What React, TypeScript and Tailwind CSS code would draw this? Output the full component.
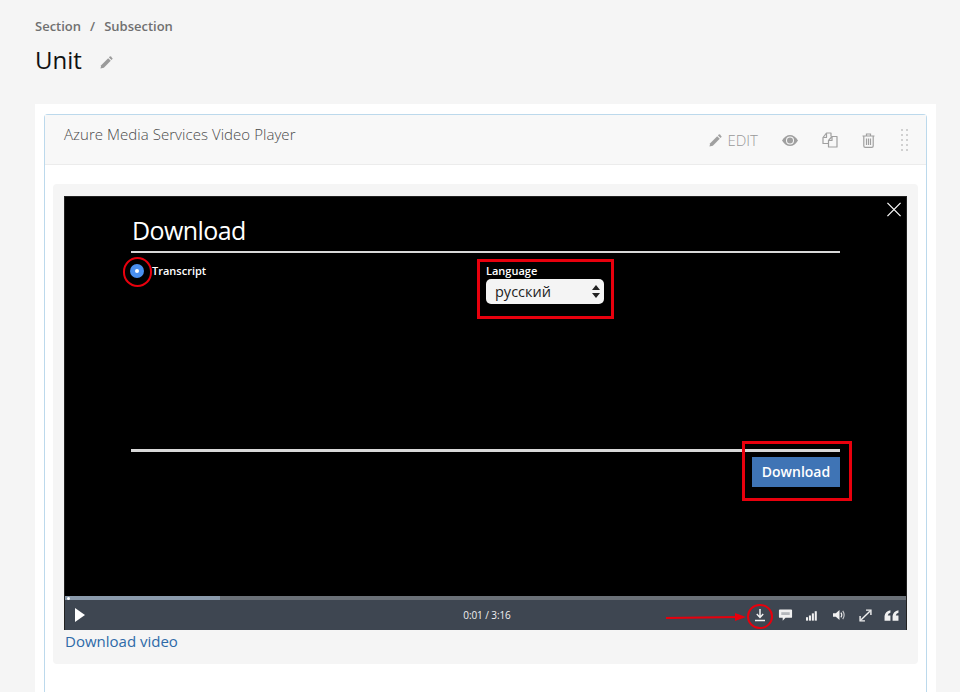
const sans = "font-['Open_Sans',sans-serif]";

function PencilGlyph({ className }: { className: string }) {
  return (
    <svg viewBox="0 0 14 14" className={className} fill="currentColor">
      <path d="M0.5 13.5 L1.3 9.9 L8.8 2.4 L11.6 5.2 L4.1 12.7 Z" />
      <path d="M9.6 1.6 L10.7 0.6 Q11.2 0.2 11.7 0.6 L13.4 2.3 Q13.8 2.8 13.4 3.3 L12.4 4.4 Z" />
    </svg>
  );
}

function EyeGlyph() {
  return (
    <svg viewBox="0 0 16 11" className="h-[11px] w-[16px]" fill="currentColor">
      <path d="M0 5.5 Q3.5 0 8 0 Q12.5 0 16 5.5 Q12.5 11 8 11 Q3.5 11 0 5.5 Z" />
      <circle cx="8" cy="5.5" r="4" fill="#f8f8f8" />
      <circle cx="8" cy="5.5" r="3" />
    </svg>
  );
}

function CopyGlyph() {
  return (
    <svg viewBox="0 0 16 16" className="h-4 w-4" fill="none" stroke="currentColor" strokeWidth="1.2" strokeLinejoin="round">
      <path d="M6.5 11.5 H1 V5.5 L4.5 1 H9 V4.5" />
      <path d="M4.5 1.2 V5.5 H1.2" />
      <path d="M6.5 15 V8.5 L10 4.5 H15 V15 Z" />
      <path d="M10 4.7 V8.5 H6.7" />
    </svg>
  );
}

function TrashGlyph() {
  return (
    <svg viewBox="0 0 13 15" className="h-[15px] w-[13px]" fill="none" stroke="currentColor" strokeWidth="1.2">
      <path d="M0.5 3 H12.5 M4.5 3 V1 H8.5 V3" />
      <path d="M1.8 3 V13 Q1.8 14.4 3.2 14.4 H9.8 Q11.2 14.4 11.2 13 V3" />
      <path d="M4.5 5.5 V12 M6.5 5.5 V12 M8.5 5.5 V12" />
    </svg>
  );
}

function Controls() {
  return (
    <div className="flex h-[30px] items-center bg-[#3e4651] pl-[10px] pr-[7px] text-white">
      <div className="flex-1">
        <svg viewBox="0 0 10 14" className="h-[14px] w-[10px]" fill="white">
          <path d="M0 0 L10 7 L0 14 Z" />
        </svg>
      </div>
      <span className="text-[10px] tracking-[-0.1px] text-[#f1f1f1]">0:01 / 3:16</span>
      <div className="flex flex-1 items-center justify-end">
        {/* download */}
        <svg viewBox="0 0 14 14" className="h-[14px] w-[14px]" fill="none" stroke="#f1f1f1" strokeWidth="1.5">
          <path d="M7 1 V9 M3.8 6 L7 9.4 L10.2 6 M2 12.5 H12" />
        </svg>
        {/* captions bubble */}
        <svg viewBox="0 0 16 14" className="ml-[11px] h-[14px] w-[15px]">
          <path d="M2 1 H14 Q15 1 15 2 V9 Q15 10 14 10 H8 L5 13 V10 H2 Q1 10 1 9 V2 Q1 1 2 1 Z" fill="#f1f1f1" />
          <rect x="3.5" y="4" width="9" height="3" fill="#b5b8bc" />
        </svg>
        {/* quality bars */}
        <svg viewBox="0 0 14 12" className="ml-[13px] h-[11px] w-[12px]" fill="#f1f1f1">
          <rect x="0" y="8" width="2.4" height="4" />
          <rect x="3.4" y="6" width="2.4" height="6" />
          <rect x="6.8" y="3.5" width="2.4" height="8.5" />
          <rect x="10.2" y="1" width="2.4" height="11" />
        </svg>
        {/* volume */}
        <svg viewBox="0 0 14 12" className="ml-[15px] h-[12px] w-[13px]" fill="#f1f1f1">
          <path d="M0 4 H3 L7 0.5 V11.5 L3 8 H0 Z" />
          <path d="M8.5 3.5 Q10.5 6 8.5 8.5" fill="none" stroke="#f1f1f1" strokeWidth="1.2" />
          <path d="M10.5 1.5 Q13.5 6 10.5 10.5" fill="none" stroke="#c9cbce" strokeWidth="1.2" />
        </svg>
        {/* fullscreen */}
        <svg viewBox="0 0 12 12" className="ml-[13px] h-[13px] w-[13px]" fill="none" stroke="#f1f1f1" strokeWidth="1.3">
          <path d="M2 10 L10 2 M6.5 1 H11 V5.5 M1 6.5 V11 H5.5" />
        </svg>
        {/* quote */}
        <svg viewBox="0 0 14 12" className="ml-[12px] h-[13px] w-[15px]" fill="#f1f1f1">
          <path d="M6 1 Q1 2 0.5 6.5 V11 H6 V6 H3.5 Q3.7 3.8 6 3.4 Z" />
          <path d="M13.5 1 Q8.5 2 8 6.5 V11 H13.5 V6 H11 Q11.2 3.8 13.5 3.4 Z" />
        </svg>
      </div>
    </div>
  );
}

function VideoPlayer() {
  return (
    <div className="relative h-[434px] border border-[#222] bg-black text-white">
      <svg viewBox="0 0 16 16" className="absolute right-[4px] top-[5px] h-[15px] w-4" stroke="white" strokeWidth="1.3">
        <path d="M1 1 L15 15 M15 1 L1 15" />
      </svg>

      <div className="flex h-[399px] flex-col pl-[66px] pr-[66px] pt-[17px]">
        <h2 className="h-[39px] border-b-2 border-[#d8d8d8] pl-[1px] text-[25px] font-medium leading-[32px] tracking-[-0.6px]">Download</h2>
        <div className="flex h-[196px] items-start pt-[9px]">
          <label className="-ml-[1px] flex w-[356px] items-center gap-[8px] text-[11px] font-semibold leading-[17px]">
            <span className="flex h-[14px] w-[14px] items-center justify-center rounded-full bg-[#4a90f0]">
              <span className="h-[4px] w-[4px] rounded-full bg-white" />
            </span>
            Transcript
          </label>
          <div className="flex flex-col">
            <span className="text-[11px] font-semibold leading-[17px]">Language</span>
            <div className="flex h-[25px] w-[118px] items-center justify-between rounded-[5px] bg-[#f4f4f4] pl-[9px] pr-[4px] text-[14.5px] text-[#222]">
              русский
              <svg viewBox="0 0 8 13" className="h-[13px] w-[8px]" fill="#222">
                <path d="M4 0 L8 5 H0 Z M4 13 L0 8 H8 Z" />
              </svg>
            </div>
          </div>
        </div>
        <div className="h-[3px] bg-[#d8d8d8]" />
        <div className="flex justify-end pt-[5px]">
          <button className="h-[30px] w-[88px] bg-[#3f74b5] pb-[2px] text-[14px] font-semibold text-white">Download</button>
        </div>
      </div>

      <div className="relative h-[4px] bg-[#6a7077]">
        <div className="h-full w-[155px] bg-[#8a9aab]" />
        <div className="absolute left-[2px] top-[1px] h-[3px] w-[3px] rounded-full bg-white" />
      </div>
      <Controls />

      {/* red annotations */}
      <div className="absolute left-[58px] top-[60px] h-[30px] w-[29px] rounded-full border-2 border-[#e8000d]" />
      <div className="absolute left-[412px] top-[62px] h-[60px] w-[137px] border-[3px] border-[#e8000d]" />
      <div className="absolute left-[677px] top-[244px] h-[60px] w-[110px] border-[3px] border-[#e8000d]" />
      <div className="absolute left-[682px] top-[407px] h-[25px] w-[26px] rounded-full border-2 border-[#e8000d]" />
      <svg viewBox="0 0 82 10" className="absolute left-[601px] top-[415px] h-[10px] w-[82px]">
        <path d="M0 6 L72 5" stroke="#e8000d" strokeWidth="2" />
        <path d="M69 1 L80 5 L69 9 Z" fill="#e8000d" />
      </svg>
    </div>
  );
}

export default function App() {
  return (
    <div className={`h-[692px] overflow-hidden bg-[#f5f5f5] pl-[35px] pr-[24px] pt-[17px] ${sans}`}>
      <div className="flex gap-[9px] text-[13px] font-semibold leading-[18px] text-[#707070]">
        <span>Section</span>
        <span>/</span>
        <span>Subsection</span>
      </div>
      <div className="mt-[7px] flex h-[36px] items-center gap-[18px]">
        <h1 className="text-[24px] leading-[36px] text-[#111]">Unit</h1>
        <PencilGlyph className="mt-[4px] h-[13px] w-[13px] text-[#9a9a9a]" />
      </div>

      <div className="mt-[26px] bg-white px-[9px] pt-[10px]">
        <div className="rounded-t-[4px] border border-b-0 border-[#bcd9ec]">
          <div className="flex h-[50px] items-start justify-between border-b border-[#ececec] bg-[#f8f8f8] pl-[19px] pr-[18px]">
            <span className="pt-[9px] text-[15px] font-light leading-[21px] tracking-[0.05px] text-[#4a4a4a]">Azure Media Services Video Player</span>
            <div className="flex items-center pt-[14px] text-[#a0a0a0]">
              <PencilGlyph className="h-[13px] w-[13px]" />
              <span className="ml-[5px] text-[15px] font-light leading-[20px] text-[#999]">EDIT</span>
              <span className="ml-[24px]"><EyeGlyph /></span>
              <span className="ml-[24px]"><CopyGlyph /></span>
              <span className="ml-[24px]"><TrashGlyph /></span>
              <div className="ml-[26px] grid grid-cols-2 gap-x-[3px] gap-y-[3px]">
                {Array.from({ length: 10 }).map((_, i) => (
                  <span key={i} className="h-[2px] w-[2px] bg-[#d0d0d0]" />
                ))}
              </div>
            </div>
          </div>
          <div className="h-[540px] bg-white pl-[8px] pr-[8px] pt-[19px]">
            <div className="rounded-[4px] bg-[#f5f5f5] pb-[12px] pl-[11px] pr-[11px] pt-[12px]">
              <VideoPlayer />
              <a className="block pl-[1px] pt-[1px] text-[15px] leading-[21px] text-[#2e6aa8]">Download video</a>
            </div>
          </div>
        </div>
      </div>
    </div>
  );
}
